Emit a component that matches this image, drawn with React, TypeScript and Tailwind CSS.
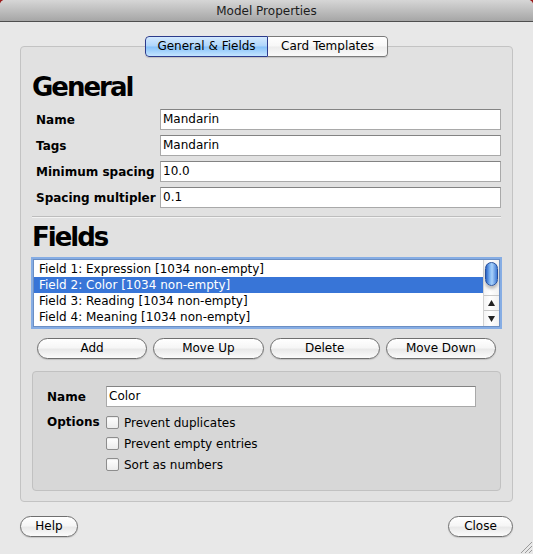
import React from 'react';

const FIELDS = [
  'Field 1: Expression [1034 non-empty]',
  'Field 2: Color [1034 non-empty]',
  'Field 3: Reading [1034 non-empty]',
  'Field 4: Meaning [1034 non-empty]',
];

const GENERAL_ROWS = [
  { label: 'Name', value: 'Mandarin' },
  { label: 'Tags', value: 'Mandarin' },
  { label: 'Minimum spacing', value: '10.0' },
  { label: 'Spacing multipler', value: '0.1' },
];

const OPTIONS = ['Prevent duplicates', 'Prevent empty entries', 'Sort as numbers'];

const AquaButton: React.FC<{ label: string; className?: string }> = ({ label, className = '' }) => (
  <button
    className={`h-[21px] rounded-full border border-[#6f6f6f] bg-[linear-gradient(to_bottom,#ffffff_0%,#f6f6f6_45%,#e9e9e9_55%,#fbfbfb_100%)] text-[12px] leading-[19px] text-black shadow-[0_1px_1px_rgba(0,0,0,0.15)] ${className}`}
  >
    {label}
  </button>
);

const TextField: React.FC<{ value: string; className?: string }> = ({ value, className = '' }) => (
  <div
    className={`h-[21px] border border-[#a9a9a9] border-t-[#838383] bg-white pl-[2px] text-[12px] leading-[19px] text-black ${className}`}
  >
    {value}
  </div>
);

const Checkbox: React.FC<{ label: string }> = ({ label }) => (
  <label className="flex h-[21px] items-center gap-[5px]">
    <span className="h-[13px] w-[13px] rounded-[2px] border border-[#8d8d8d] bg-[linear-gradient(to_bottom,#ffffff,#ececec)] shadow-[inset_0_1px_1px_rgba(0,0,0,0.08)]" />
    <span className="text-[12px] text-black">{label}</span>
  </label>
);

const ScrollBar: React.FC = () => (
  <div className="flex w-[16px] flex-col border-l border-[#d2d2d2] bg-[linear-gradient(to_right,#f4f4f4,#ffffff_40%,#f1f1f1)]">
    <div className="flex flex-1 flex-col items-center pt-[2px]">
      <div className="h-[24px] w-[13px] rounded-full border border-[#27509b] bg-[linear-gradient(to_right,#2a64c7,#7fb6f3_35%,#a9d1fa_55%,#3e7ad6)] shadow-[0_3px_3px_rgba(0,0,0,0.25)]" />
    </div>
    <div className="flex h-[15px] items-center justify-center border-t border-[#c9c9c9]">
      <svg width="7" height="6" viewBox="0 0 7 6">
        <polygon points="3.5,0 7,6 0,6" fill="#222" />
      </svg>
    </div>
    <div className="flex h-[16px] items-center justify-center border-t border-[#c9c9c9]">
      <svg width="7" height="6" viewBox="0 0 7 6">
        <polygon points="0,0 7,0 3.5,6" fill="#222" />
      </svg>
    </div>
  </div>
);

export default function App() {
  return (
    <div className="h-[554px] w-[533px] bg-[#9b1b1b] font-['DejaVu_Sans',sans-serif]">
      <div className="relative flex h-full flex-col overflow-hidden rounded-t-[5px] bg-[#e8e8e8]">
        {/* title bar */}
        <div className="flex h-[22px] items-center justify-center border-b border-[#4f4f4f] bg-[linear-gradient(to_bottom,#d6d6d6,#a6a6a6)] text-[12px] text-[#1c1c1c]">
          Model Properties
        </div>

        <div className="flex flex-col px-[20px] pt-[14px]">
          {/* tabs */}
          <div className="relative z-10 flex h-[21px] self-center overflow-hidden rounded-[4px] text-[12px] leading-[19px] shadow-[0_1px_1px_rgba(0,0,0,0.15)]">
            <div className="w-[123px] rounded-l-[4px] border border-[#2c3b8c] bg-[linear-gradient(to_bottom,#d3e9fe_0%,#aed5fb_48%,#86c1f9_52%,#c4e5ff_100%)] text-center text-black">
              General &amp; Fields
            </div>
            <div className="w-[120px] rounded-r-[4px] border border-l-0 border-[#7a7a7a] bg-[linear-gradient(to_bottom,#ffffff_0%,#f7f7f7_48%,#ececec_52%,#fafafa_100%)] text-center text-black">
              Card Templates
            </div>
          </div>

          {/* tab panel */}
          <div className="-mt-[11px] flex flex-col rounded-[4px] border border-[#c3c3c3] bg-[#e1e1e1] px-[11px] pb-[10px] pt-[25px]">
            <h1 className="h-[30px] text-[26px] font-bold leading-[30px] tracking-[-2px] text-black">General</h1>

            <div className="mt-[7px] flex flex-col gap-[5px]">
              {GENERAL_ROWS.map((row) => (
                <div key={row.label} className="grid grid-cols-[128px_1fr] items-center">
                  <span className="pl-[4px] text-[12px] font-bold text-black">{row.label}</span>
                  <TextField value={row.value} />
                </div>
              ))}
            </div>

            <div className="mt-[8px] border-t border-b border-t-[#bdbdbd] border-b-[#f3f3f3]" />

            <h1 className="mt-[4px] h-[30px] text-[26px] font-bold leading-[30px] tracking-[-2px] text-black">Fields</h1>

            {/* field list */}
            <div className="mx-[1px] mt-[7px] flex h-[68px] border border-[#6b8fc4] bg-white ring-2 ring-[#86ade4]">
              <div className="flex flex-1 flex-col py-[1px]">
                {FIELDS.map((f, i) => (
                  <div
                    key={f}
                    className={`h-[16px] pl-[5px] text-[12px] leading-[16px] ${
                      i === 1 ? 'bg-[#3875d7] text-white' : 'text-black'
                    }`}
                  >
                    {f}
                  </div>
                ))}
              </div>
              <ScrollBar />
            </div>

            {/* list buttons */}
            <div className="mt-[11px] flex gap-[6px] px-[5px]">
              <AquaButton label="Add" className="flex-1" />
              <AquaButton label="Move Up" className="flex-1" />
              <AquaButton label="Delete" className="flex-1" />
              <AquaButton label="Move Down" className="flex-1" />
            </div>

            {/* field properties */}
            <div className="mt-[12px] flex h-[120px] flex-col rounded-[4px] border border-[#c1c1c1] bg-[#d7d7d7] pl-[14px] pr-[24px] pt-[14px]">
              <div className="grid grid-cols-[59px_1fr] items-center">
                <span className="text-[12px] font-bold text-black">Name</span>
                <TextField value="Color" />
              </div>
              <div className="mt-[5px] grid grid-cols-[59px_1fr]">
                <span className="text-[12px] font-bold leading-[21px] text-black">Options</span>
                <div className="flex flex-col">
                  {OPTIONS.map((o) => (
                    <Checkbox key={o} label={o} />
                  ))}
                </div>
              </div>
            </div>
          </div>

          {/* dialog buttons */}
          <div className="mt-[14px] flex justify-between">
            <AquaButton label="Help" className="w-[58px]" />
            <AquaButton label="Close" className="w-[65px]" />
          </div>
        </div>

        {/* resize grip */}
        <svg className="absolute bottom-[1px] right-[1px]" width="12" height="12" viewBox="0 0 12 12">
          <line x1="1" y1="12" x2="12" y2="1" stroke="#9a9a9a" strokeWidth="1" />
          <line x1="5" y1="12" x2="12" y2="5" stroke="#9a9a9a" strokeWidth="1" />
          <line x1="9" y1="12" x2="12" y2="9" stroke="#9a9a9a" strokeWidth="1" />
        </svg>
      </div>
    </div>
  );
}
